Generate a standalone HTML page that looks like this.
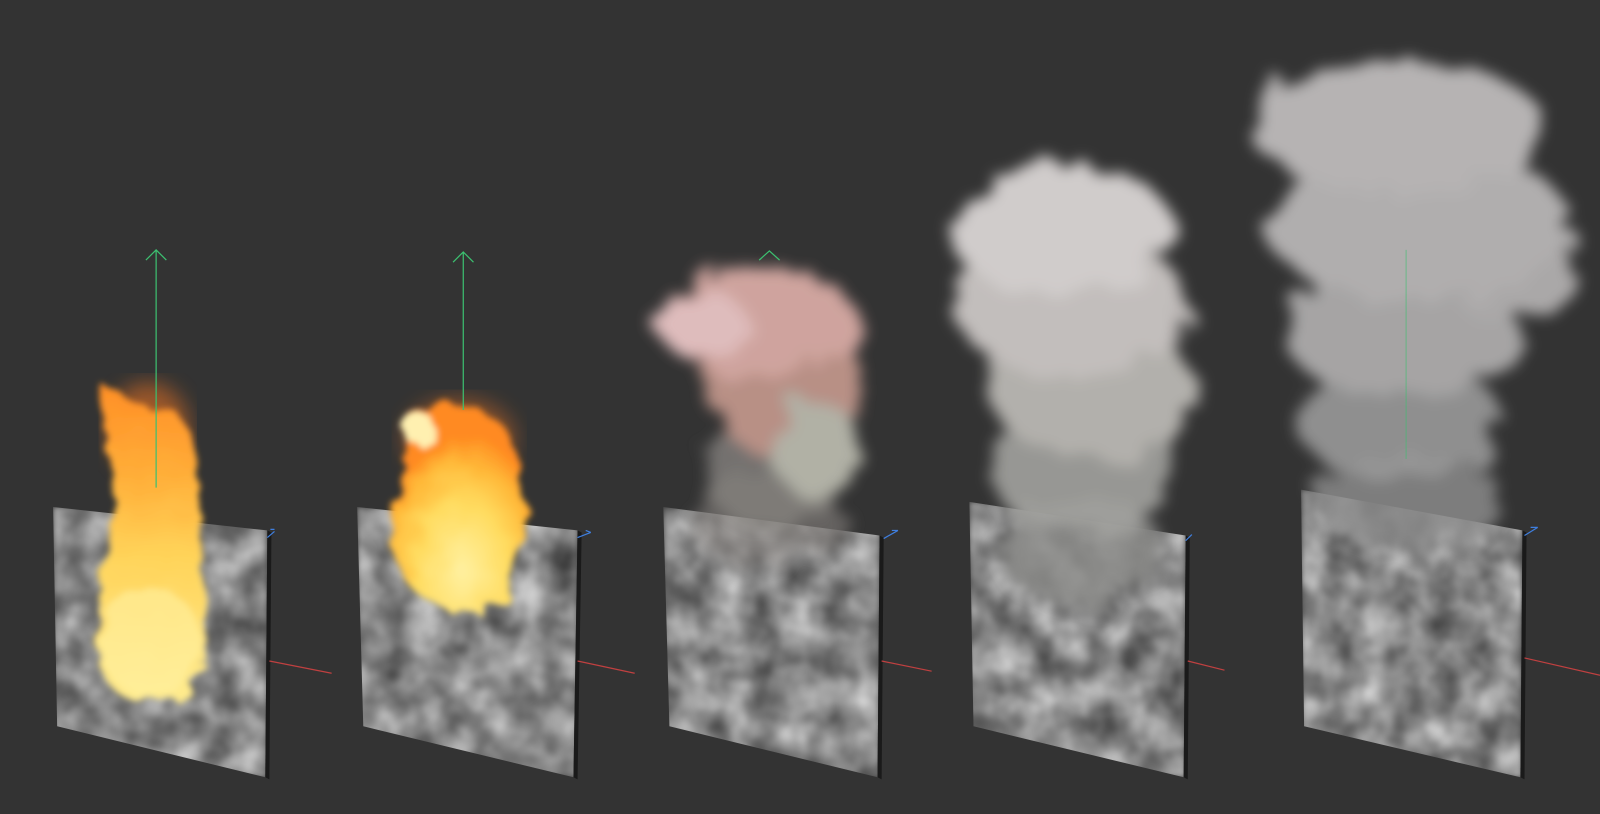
<!DOCTYPE html>
<html><head><meta charset="utf-8"><style>
html,body{margin:0;padding:0;background:#333333;width:1600px;height:814px;overflow:hidden}
svg{display:block}
</style></head><body>
<svg width="1600" height="814" viewBox="0 0 1568 798" preserveAspectRatio="none" xmlns="http://www.w3.org/2000/svg">
<defs>
<filter id="noise" x="0" y="0" width="100%" height="100%" color-interpolation-filters="sRGB">
<feTurbulence type="fractalNoise" baseFrequency="0.03" numOctaves="3" seed="3"/>
<feColorMatrix type="matrix" values="0.75 0 0 0 0.16  0.75 0 0 0 0.16  0.75 0 0 0 0.16  0 0 0 0 1"/>
<feGaussianBlur stdDeviation="2.5"/>
<feComposite in2="SourceGraphic" operator="in"/>
</filter>
<filter id="cloud" x="-20%" y="-20%" width="140%" height="140%">
<feTurbulence type="fractalNoise" baseFrequency="0.03" numOctaves="3" seed="7" result="t"/>
<feDisplacementMap in="SourceGraphic" in2="t" scale="40" result="d"/>
<feGaussianBlur in="d" stdDeviation="7"/>
</filter>
<filter id="flame" x="-30%" y="-30%" width="160%" height="160%">
<feTurbulence type="fractalNoise" baseFrequency="0.04" numOctaves="2" seed="2" result="t"/>
<feDisplacementMap in="SourceGraphic" in2="t" scale="22" result="d"/>
<feGaussianBlur in="d" stdDeviation="3"/>
</filter>
<filter id="soft"><feGaussianBlur stdDeviation="10"/></filter>
<radialGradient id="fl" cx="50%" cy="80%" r="65%">
<stop offset="0" stop-color="#fff0a0"/><stop offset="0.5" stop-color="#ffdc60"/><stop offset="0.8" stop-color="#ffb838"/><stop offset="1" stop-color="#ff8a20"/>
</radialGradient>
<linearGradient id="fl1" x1="0" y1="0" x2="0" y2="1">
<stop offset="0" stop-color="#ff8c24"/><stop offset="0.3" stop-color="#ffb03a"/><stop offset="0.55" stop-color="#ffd45a"/><stop offset="1" stop-color="#ffec90"/>
</linearGradient>
</defs>

<g>
<polygon points="52,497 262,520 260,762 56,712" fill="#fff" filter="url(#noise)"/>
<polygon points="262,520 266,522 264,764 260,762" fill="#1a1a1a"/>
<polygon points="350,497 566,520 562,762 356,712" fill="#fff" filter="url(#noise)"/>
<polygon points="566,520 570,522 566,764 562,762" fill="#1a1a1a"/>
<polygon points="650,497 862,525 860,762 656,712" fill="#fff" filter="url(#noise)"/>
<polygon points="862,525 866,527 864,764 860,762" fill="#1a1a1a"/>
<polygon points="950,492 1162,525 1160,762 954,712" fill="#fff" filter="url(#noise)"/>
<polygon points="1162,525 1166,527 1164,764 1160,762" fill="#1a1a1a"/>
<polygon points="1275,480 1492,520 1490,762 1278,712" fill="#fff" filter="url(#noise)"/>
<polygon points="1492,520 1496,522 1494,764 1490,762" fill="#1a1a1a"/>
</g>

<g stroke="#c04040" stroke-width="1.2">
<line x1="264" y1="648" x2="325" y2="660"/>
<line x1="566" y1="648" x2="622" y2="660"/>
<line x1="864" y1="648" x2="913" y2="658"/>
<line x1="1164" y1="648" x2="1200" y2="657"/>
<line x1="1494" y1="645" x2="1568" y2="662"/>
</g>
<g stroke="#3f7fe0" stroke-width="1.2" fill="none">
<path d="M262,527 l7,-6 M265,519 l4,0"/>
<path d="M566,527 l13,-5 M574,520 l5,2"/>
<path d="M866,528 l14,-8 M874,520 l6,0"/>
<path d="M1162,530 l6,-6"/>
<path d="M1494,525 l13,-8 M1500,517 l7,0"/>
</g>

<ellipse cx="145" cy="420" rx="40" ry="45" fill="#ff7a20" opacity="0.5" filter="url(#soft)"/>
<g filter="url(#flame)">
<path d="M100,375 C115,395 135,385 150,405 C165,385 185,410 190,450 C198,490 195,520 198,560 C205,600 205,640 195,665 C185,685 165,690 145,688 C110,688 92,660 95,620 C95,580 108,540 112,500 C115,460 92,400 100,375Z" fill="url(#fl1)"/>
<ellipse cx="148" cy="630" rx="50" ry="52" fill="#fff0a0" opacity="0.6"/>
</g>
<ellipse cx="450" cy="430" rx="55" ry="40" fill="#ff7a20" opacity="0.4" filter="url(#soft)"/>
<g filter="url(#flame)">
<path d="M400,405 C420,395 470,390 495,420 C510,450 505,480 520,500 C530,520 500,540 500,570 C495,600 470,605 440,598 C410,590 385,565 385,530 C380,490 395,470 398,440Z" fill="url(#fl)"/>
<ellipse cx="410" cy="420" rx="16" ry="16" fill="#fff0b0"/>
</g>

<g filter="url(#cloud)" opacity="0.95">
<ellipse cx="750" cy="510" rx="75" ry="45" fill="#8a8682" opacity="0.6"/>
<ellipse cx="760" cy="460" rx="70" ry="60" fill="#8a8682" opacity="0.8"/>
<ellipse cx="770" cy="380" rx="75" ry="70" fill="#c0958a"/>
<ellipse cx="800" cy="440" rx="45" ry="45" fill="#b8b8ac"/>
<ellipse cx="745" cy="315" rx="95" ry="55" fill="#d8aaa4"/>
<ellipse cx="690" cy="320" rx="45" ry="30" fill="#e8c4c4"/>
</g>

<g filter="url(#cloud)">
<ellipse cx="1060" cy="540" rx="80" ry="55" fill="#8c8c8a" opacity="0.85"/>
<ellipse cx="1060" cy="460" rx="90" ry="65" fill="#a2a29e" opacity="0.9"/>
<ellipse cx="1070" cy="380" rx="100" ry="70" fill="#b2b0ac"/>
<ellipse cx="1050" cy="300" rx="115" ry="70" fill="#c2bebc"/>
<ellipse cx="1040" cy="225" rx="110" ry="65" fill="#d0cccb"/>
</g>

<g filter="url(#cloud)">
<ellipse cx="1380" cy="490" rx="95" ry="45" fill="#8a8a8a" opacity="0.85"/>
<ellipse cx="1370" cy="410" rx="100" ry="60" fill="#999" opacity="0.9"/>
<ellipse cx="1375" cy="320" rx="120" ry="70" fill="#a6a4a4"/>
<ellipse cx="1480" cy="270" rx="60" ry="50" fill="#aaa8a8"/>
<ellipse cx="1390" cy="220" rx="150" ry="75" fill="#b0aeae"/>
<ellipse cx="1370" cy="125" rx="145" ry="65" fill="#b6b3b3"/>
</g>

<g stroke="#3cc070" stroke-width="1.2" fill="none">
<path d="M153,478 V245 M143,255 L153,245 L163,255"/>
<path d="M454,402 V247 M444,257 L454,247 L464,257"/>
<path d="M744,255 L754,246 L764,255"/>
<path d="M1378,450 V245" opacity="0.5"/>
</g>
</svg>
</body></html>
